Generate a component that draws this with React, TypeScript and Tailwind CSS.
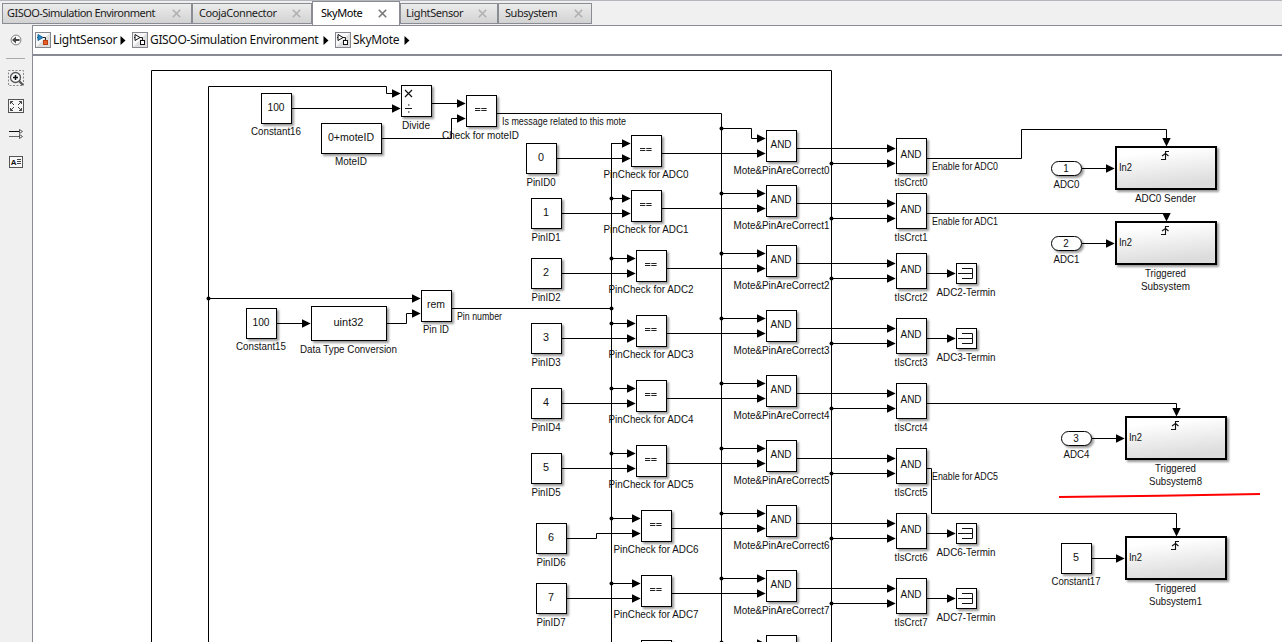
import React from "react";

const INK = "#000";

type Anchor = "start" | "middle";

function Txt({ x, y, w, children, size = 10.3, anchor = "middle" }: { x: number; y: number; w: number; children: string; size?: number; anchor?: Anchor }) {
  const left = anchor === "middle" ? x - w / 2 : x;
  return (
    <text x={left} y={y + 3.6} fontSize={size} textLength={w} lengthAdjust="spacingAndGlyphs" fill="#111">
      {children}
    </text>
  );
}

function Block({ x, y, w = 30, h = 30, text, tw }: { x: number; y: number; w?: number; h?: number; text?: string; tw?: number }) {
  return (
    <g>
      <rect x={x + 0.5} y={y + 0.5} width={w} height={h} fill="#fff" stroke={INK} filter="url(#shadow)" />
      {text && tw && <Txt x={x + w / 2} y={y + Math.floor(h / 2) - 0.4} w={tw} size={10}>{text}</Txt>}
    </g>
  );
}

function Wire({ d }: { d: string }) {
  return <path d={d} fill="none" stroke={INK} strokeWidth={1} />;
}

function Head({ x, y, down = false }: { x: number; y: number; down?: boolean }) {
  const cx = x + 0.7;
  const cy = y + 0.5;
  return down ? (
    <polygon points={`${x + 0.5},${y + 0.5} ${x - 3.7},${y - 8} ${x + 4.7},${y - 8}`} fill={INK} />
  ) : (
    <polygon points={`${cx},${cy} ${cx - 8.7},${cy - 4.2} ${cx - 8.7},${cy + 4.2}`} fill={INK} />
  );
}

function Dot({ x, y }: { x: number; y: number }) {
  return <circle cx={x + 0.5} cy={y + 0.5} r={2} fill={INK} />;
}

function Equals({ x, y }: { x: number; y: number }) {
  return <path d={`M${x + 10} ${y + 12.5}h5.3M${x + 16.3} ${y + 12.5}h5.300M${x + 10} ${y + 14.5}h5.300M${x + 16.3} ${y + 14.5}h5.300`} stroke="#222" fill="none" />;
}

function Subsystem({ x, y, label, label2, w1, w2 }: { x: number; y: number; label: string; label2?: string; w1: number; w2?: number }) {
  return (
    <g>
      <rect x={x + 1} y={y + 1} width={100} height={42} fill="url(#sub)" stroke={INK} strokeWidth={2} filter="url(#shadow)" />
      <path d={`M${x + 46} ${y + 13.5}h4.5v-8h3.5M${x + 47} ${y + 10}l3.500 -2.500l3 2.500`} fill="none" stroke="#111" strokeWidth={1.1} />
      <Txt x={x + 4} y={y + 21.5} w={13} size={10} anchor="start">In2</Txt>
      <Txt x={x + 50.5} y={y + 52} w={w1}>{label}</Txt>
      {label2 && w2 && <Txt x={x + 50.5} y={y + 65} w={w2}>{label2}</Txt>}
    </g>
  );
}

function Port({ x, y, n, label }: { x: number; y: number; n: string; label: string }) {
  return (
    <g>
      <rect x={x + 0.5} y={y + 0.5} width={30} height={14} rx={7} fill="#fff" stroke={INK} filter="url(#shadow)" />
      <Txt x={x + 15} y={y + 7} w={5.5} size={10}>{n}</Txt>
      <Txt x={x + 15.5} y={y + 23} w={26}>{label}</Txt>
      <Wire d={`M${x + 31} ${y + 7.5}H${x + 60}`} />
      <Head x={x + 63} y={y + 7} />
    </g>
  );
}

const rows = [
  { b: 130, pinX: 526, pinY: 143, chkX: 631 },
  { b: 185, pinX: 531, pinY: 198, chkX: 631 },
  { b: 245, pinX: 531, pinY: 258, chkX: 636, term: true },
  { b: 310, pinX: 531, pinY: 323, chkX: 636, term: true },
  { b: 375, pinX: 531, pinY: 388, chkX: 636 },
  { b: 440, pinX: 531, pinY: 453, chkX: 636 },
  { b: 505, pinX: 536, pinY: 523, chkX: 641, term: true },
  { b: 570, pinX: 536, pinY: 583, chkX: 641, term: true },
];

function Row({ i }: { i: number }) {
  const { b, pinX, pinY, chkX, term } = rows[i];
  return (
    <g>
      <Wire d={i === 6 ? `M${pinX + 31} 538.5H596.5V533.5H${chkX - 6}` : `M${pinX + 31} ${b + 28.5}H${chkX - 6}`} />
      <Wire d={`M611.5 ${b + 13.5}H${chkX - 6}`} />
      <Head x={chkX - 1} y={b + 13} />
      <Head x={chkX - 1} y={b + 28} />
      {i > 0 && <Dot x={611} y={b + 13} />}
      <Wire d={`M${chkX + 31} ${b + 23.5}H760`} />
      <Wire d={i === 0 ? "M721.5 128.5H751.5V138.5H760" : `M721.5 ${b + 8.5}H760`} />
      <Dot x={721} y={i === 0 ? 128 : b + 8} />
      <Head x={765} y={b + 8} />
      <Head x={765} y={b + 23} />
      <Wire d={`M797 ${b + 18.5}H890M831.5 ${b + 33.5}H890`} />
      <Dot x={831} y={b + 33} />
      <Head x={895} y={b + 18} />
      <Head x={895} y={b + 33} />
      <Block x={pinX} y={pinY} text={String(i)} tw={6} />
      <Txt x={pinX + 15} y={pinY + 39} w={29}>{`PinID${i}`}</Txt>
      <Block x={chkX} y={b + 5} h={31} />
      <Equals x={chkX - 1} y={b + 6} />
      <Txt x={chkX + 15} y={b + 44.5} w={85}>{`PinCheck for ADC${i}`}</Txt>
      <Block x={766} y={b} h={31} text="AND" tw={21} />
      <Txt x={781.5} y={b + 40} w={96}>{`Mote&PinAreCorrect${i}`}</Txt>
      <Block x={896} y={b + 8} h={35} text="AND" tw={21} />
      <Txt x={911} y={b + 52} w={33}>{`tIsCrct${i}`}</Txt>
      {term && (
        <g>
          <Wire d={`M927 ${b + 28.5}H950`} />
          <Head x={955} y={b + 28} />
          <Block x={956} y={b + 18} w={20} h={20} />
          <path d={`M958 ${b + 28.5}h14M962 ${b + 23.5}h10.500v10h-10.500`} fill="none" stroke="#111" />
          <Txt x={966} y={b + 47} w={59}>{`ADC${i}-Termin`}</Txt>
        </g>
      )}
    </g>
  );
}

function Diagram() {
  return (
    <svg className="block h-[586px] w-[1249px]" viewBox="33 56 1249 586" fontFamily="'Liberation Sans', Arial, sans-serif">
      <defs>
        <filter id="shadow" x="-20%" y="-30%" width="150%" height="170%">
          <feDropShadow dx="2" dy="2" stdDeviation="1.300" floodColor="#000" floodOpacity="0.4" />
        </filter>
        <linearGradient id="sub" x1="0" y1="0" x2="0.25" y2="1">
          <stop offset="0.2" stopColor="#fff" />
          <stop offset="1" stopColor="#dcdcdc" />
        </linearGradient>
      </defs>

      <Wire d="M151.5 642V70.5H831.5V642" />
      <Wire d="M208.5 642V86.5H386.5V93.5H395M208.5 298.5H415" />
      <Wire d="M292 108.500H395M432 103.500H460M382 138.500H451.500V118.500H460M497 113.500H721.500V642" />
      <Wire d="M277 323.500H305M387 323.500H406.500V313.500H415M452 308.500H611.500M611.500 143V642" />
      <Head x={400} y={93} />
      <Head x={400} y={108} />
      <Head x={465} y={103} />
      <Head x={465} y={118} />
      <Head x={420} y={298} />
      <Head x={420} y={313} />
      <Head x={310} y={323} />
      <Dot x={208} y={298} />
      <Dot x={611} y={308} />

      <Block x={261} y={93} text="100" tw={17} />
      <Txt x={276} y={131.500} w={50}>Constant16</Txt>
      <Block x={321} y={123} w={60} text="0+moteID" tw={46} />
      <Txt x={351} y={161.500} w={32}>MoteID</Txt>
      <Block x={401} y={85} h={31} />
      <path d="M405 90l7 7M412 90l-7 7M405 108.500h7M408 105h1.500M408 112h1.500" fill="none" stroke="#111" strokeWidth={1.2} />
      <Txt x={416} y={125} w={28}>Divide</Txt>
      <Block x={466} y={95} h={31} />
      <Equals x={465} y={96} />
      <Txt x={480.500} y={135} w={77}>Check for moteID</Txt>
      <Txt x={502} y={121} w={124} size={10} anchor="start">Is message related to this mote</Txt>

      <Block x={246} y={308} text="100" tw={17} />
      <Txt x={261} y={346.500} w={50}>Constant15</Txt>
      <Block x={311} y={306} w={75} h={34} text="uint32" tw={30} />
      <Txt x={348.500} y={349} w={97}>Data Type Conversion</Txt>
      <Block x={421} y={290} h={31} text="rem" tw={18} />
      <Txt x={436} y={329.500} w={26}>Pin ID</Txt>
      <Txt x={457} y={316} w={45} size={10} anchor="start">Pin number</Txt>

      {rows.map((_, i) => <Row key={i} i={i} />)}

      <Block x={641} y={640} />
      <Block x={766} y={635} />
      <Wire d="M721.500 643.500H760" />
      <Dot x={721} y={642} />
      <Head x={765} y={643} />

      <Wire d="M927 158.500H1021.500V129.500H1166.500V140M927 213.500H1166.500V216M927 403.500H1176.500V410M927 468.500H931.500V513.500H1176.500V530" />
      <Head x={1166} y={146} down />
      <Head x={1166} y={221} down />
      <Head x={1176} y={416} down />
      <Head x={1176} y={536} down />
      <Txt x={932} y={166} w={66} size={10} anchor="start">Enable for ADC0</Txt>
      <Txt x={932} y={221} w={66} size={10} anchor="start">Enable for ADC1</Txt>
      <Txt x={932} y={476} w={66} size={10} anchor="start">Enable for ADC5</Txt>

      <Port x={1051} y={161} n="1" label="ADC0" />
      <Port x={1051} y={236} n="2" label="ADC1" />
      <Port x={1061} y={431} n="3" label="ADC4" />
      <Block x={1061} y={543} text="5" tw={6} />
      <Txt x={1076} y={581.500} w={49}>Constant17</Txt>
      <Wire d="M1092 558.500H1120" />
      <Head x={1124} y={558} />
      <Subsystem x={1115} y={146} label="ADC0 Sender" w1={61} />
      <Subsystem x={1115} y={221} label="Triggered" label2="Subsystem" w1={41} w2={49} />
      <Subsystem x={1125} y={416} label="Triggered" label2="Subsystem8" w1={41} w2={53} />
      <Subsystem x={1125} y={536} label="Triggered" label2="Subsystem1" w1={41} w2={53} />
      <path d="M1059 497L1160 495.800L1260 494" fill="none" stroke="#f00" strokeWidth={2} />
    </svg>
  );
}

function Cross({ active = false }: { active?: boolean }) {
  return (
    <svg className="mr-[10px] h-[9px] w-[9px] shrink-0" viewBox="0 0 9 9">
      <path d="M.8.8l7.400 7.400M8.200.8L.8 8.200" stroke={active ? "#777" : "#b0b0b0"} strokeWidth={1.600} />
    </svg>
  );
}

const tabBase = "flex h-[21px] shrink-0 items-center justify-between border border-[#8a8c93] bg-gradient-to-b from-[#ececec] to-[#d2d2d2] pb-px pl-[4px] text-[#1c1c1c]";

function Tabs() {
  return (
    <div className="flex h-[25px] items-end border-t border-[#b5b6bb] bg-[#f0f0f0] pl-[2px] text-[11px] leading-[20px] whitespace-nowrap">
      <div className={`${tabBase} mb-px w-[190px]`}><span className="tracking-[-0.54px]">GISOO-Simulation Environment</span><Cross /></div>
      <div className={`${tabBase} mb-px w-[120px] pl-[6px]`}><span className="tracking-[-0.4px]">CoojaConnector</span><Cross /></div>
      <div className="flex h-[24px] w-[88px] shrink-0 items-center justify-between border-x border-t border-[#8a8c93] bg-white pb-px pl-[8px]"><span className="tracking-[-0.45px]">SkyMote</span><span className="mr-[2px] flex"><Cross active /></span></div>
      <div className={`${tabBase} mb-px w-[98px] pl-[5px]`}><span className="tracking-[-0.4px]">LightSensor</span><Cross /></div>
      <div className={`${tabBase} mb-px w-[94px] pl-[6px]`}><span className="tracking-[-0.45px]">Subsystem</span><span className="-mr-[2px] flex"><Cross /></span></div>
    </div>
  );
}

function ModelIcon({ color = false }: { color?: boolean }) {
  return (
    <svg className="h-4 w-4 shrink-0" viewBox="0 0 16 16">
      <rect x=".5" y=".5" width="15" height="15" fill="#dedede" stroke="#85878d" />
      <path d="M1 1h14L1 15z" fill="#f8f8f8" />
      <path d="M2 5.500h1M8 5.500h2.500v3" fill="none" stroke="#222" />
      <path d="M3 2.500v6l5-3z" fill={color ? "#2788c4" : "#fff"} stroke={color ? "#17699f" : "#111"} />
      <rect x="8.500" y="8.500" width="4" height="4" fill={color ? "#e96026" : "#fff"} stroke={color ? "#b84014" : "#111"} />
    </svg>
  );
}

function Caret() {
  return <svg className="h-[9px] w-[6px] shrink-0" viewBox="0 0 6 9"><path d="M.5 0l5 4.500l-5 4.500z" fill="#000" /></svg>;
}

function Breadcrumb() {
  return (
    <div className="flex h-[30px] items-center border-b-2 border-[#888b93] bg-white pl-[2px] text-[12px] leading-4 whitespace-nowrap text-[#111]">
      <ModelIcon color />
      <span className="ml-[2px] w-[67px] tracking-[-0.28px]">LightSensor</span>
      <Caret />
      <span className="ml-[6px] flex"><ModelIcon /></span>
      <span className="ml-[2px] w-[173px] tracking-[-0.34px]">GISOO-Simulation Environment</span>
      <Caret />
      <span className="ml-[6px] flex"><ModelIcon /></span>
      <span className="ml-[2px] w-[51px] tracking-[-0.3px]">SkyMote</span>
      <Caret />
    </div>
  );
}

function Sidebar() {
  return (
    <aside className="flex w-[33px] shrink-0 flex-col border-r border-[#8a8c93] bg-[#f0f0f0]">
      <svg className="h-[160px] w-8" viewBox="0 25 32 160" fill="none">
        <circle cx="16" cy="40" r="4.900" fill="#fafafa" stroke="#808080" />
        <path d="M19.500 40h-4" stroke="#444" strokeWidth="2" />
        <path d="M12 40l4-3.500v7z" fill="#444" />
        <path d="M6 58.500h19" stroke="#aaa" />
        <rect x="8.500" y="70.500" width="15" height="15" stroke="#888" strokeDasharray="2 1.500" />
        <path d="M19 81l4 4" stroke="#555" strokeWidth="2.200" />
        <circle cx="15.500" cy="77.500" r="5" fill="#f4f8fa" stroke="#555" strokeWidth="1.300" />
        <path d="M13 77.500h5M15.500 75v5" stroke="#111" strokeWidth="1.500" />
        <rect x="8.500" y="99.500" width="15" height="13" fill="#f7f7f7" stroke="#555" />
        <path d="M10.500 104v-2.500H13M19 101.500h2.500v2.500M10.500 108v2.500H13M19 110.500h2.500V108M10.500 101.500l3.500 3.500M21.500 101.500L18 105M10.500 110.500L14 107M21.500 110.500L18 107" stroke="#444" />
        <path d="M9 131.500h10" stroke="#111" />
        <path d="M9 136.500h10" stroke="#666" />
        <path d="M19.500 129.500v4l3-2zM19.500 134.500v4l3-2z" fill="#f5f5f5" stroke="#555" />
        <rect x="9.500" y="156.500" width="13" height="11" fill="#f8f8f8" stroke="#555" />
        <text x="10.800" y="164.800" fontFamily="'Liberation Sans', sans-serif" fontSize="8" fontWeight="700" fill="#111">A</text>
        <path d="M17 159.500h4M17 161.500h4M17 163.500h4" stroke="#444" />
      </svg>
    </aside>
  );
}

export default function App() {
  return (
    <div className="flex h-[642px] w-[1282px] flex-col overflow-hidden bg-white font-['Noto_Sans','Open_Sans',sans-serif]">
      <Tabs />
      <div className="flex min-h-0 flex-1">
        <Sidebar />
        <main className="flex min-w-0 flex-1 flex-col border-t border-[#8a8c93]">
          <Breadcrumb />
          <Diagram />
        </main>
      </div>
    </div>
  );
}
